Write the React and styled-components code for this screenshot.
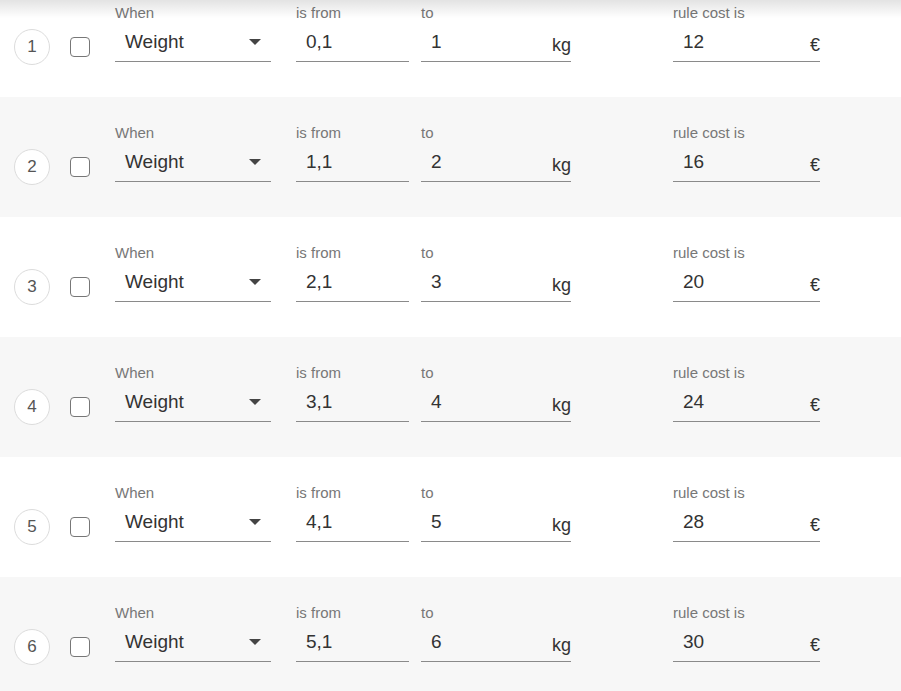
import styled, { createGlobalStyle } from 'styled-components';

const GlobalStyle = createGlobalStyle`
  html, body {
    margin: 0;
    padding: 0;
    background: #ffffff;
    overflow: hidden;
  }
  body {
    font-family: "Liberation Sans", Arial, sans-serif;
  }
`;

const Page = styled.div`
  position: relative;
  width: 901px;
  height: 691px;
  overflow: hidden;
  background: #fff;

  &::before {
    content: "";
    position: absolute;
    top: 0;
    left: 0;
    right: 0;
    height: 18px;
    background: linear-gradient(to bottom, rgba(0, 0, 0, 0.11), rgba(0, 0, 0, 0));
    pointer-events: none;
    z-index: 2;
  }
`;

const List = styled.div`
  margin-top: -23px;
  display: flex;
  flex-direction: column;
`;

const Row = styled.div`
  height: 120px;
  box-sizing: border-box;
  display: flex;
  align-items: flex-start;
  padding: 26px 0 0 14px;
  background: ${p => (p.$shaded ? '#f7f7f7' : '#ffffff')};
`;

const Index = styled.div`
  width: 36px;
  height: 36px;
  box-sizing: border-box;
  margin-top: 26px;
  border: 1px solid #dcdcdc;
  border-radius: 50%;
  background: #fff;
  display: flex;
  align-items: center;
  justify-content: center;
  font-size: 17px;
  color: #555;
`;

const Check = styled.div`
  width: 20px;
  height: 20px;
  box-sizing: border-box;
  margin: 34px 0 0 20px;
  border: 1.5px solid #777;
  border-radius: 4px;
  background: #fff;
`;

const Field = styled.div`
  width: ${p => p.$w}px;
  margin-left: ${p => p.$gap}px;
  display: flex;
  flex-direction: column;
`;

const Label = styled.div`
  box-sizing: border-box;
  height: 16px;
  padding-top: 1px;
  font-size: 15px;
  line-height: 17px;
  color: #777;
  white-space: nowrap;
`;

const Control = styled.div`
  height: 43px;
  box-sizing: border-box;
  padding: 4px 0 0 10px;
  border-bottom: 1px solid #8a8a8a;
  display: flex;
  align-items: center;
  font-size: 19px;
  color: #333;
`;

const Value = styled.span`
  flex: 1;
`;

const Unit = styled.span`
  font-size: 18px;
  color: #333;
  margin-top: 6px;
`;

const Arrow = styled.span`
  width: 0;
  height: 0;
  margin-right: 10px;
  border-left: 6.5px solid transparent;
  border-right: 6.5px solid transparent;
  border-top: 6.5px solid #444;
`;

const rows = [
  ['0,1', '1', '12'],
  ['1,1', '2', '16'],
  ['2,1', '3', '20'],
  ['3,1', '4', '24'],
  ['4,1', '5', '28'],
  ['5,1', '6', '30'],
];

export default function App() {
  return (
    <Page>
      <GlobalStyle />
      <List>
        {rows.map(([from, to, cost], i) => (
          <Row key={i} $shaded={i % 2 === 1}>
            <Index>{i + 1}</Index>
            <Check />
            <Field $w={156} $gap={25}>
              <Label>When</Label>
              <Control>
                <Value>Weight</Value>
                <Arrow />
              </Control>
            </Field>
            <Field $w={113} $gap={25}>
              <Label>is from</Label>
              <Control>
                <Value>{from}</Value>
              </Control>
            </Field>
            <Field $w={150} $gap={12}>
              <Label>to</Label>
              <Control>
                <Value>{to}</Value>
                <Unit>kg</Unit>
              </Control>
            </Field>
            <Field $w={147} $gap={102}>
              <Label>rule cost is</Label>
              <Control>
                <Value>{cost}</Value>
                <Unit>€</Unit>
              </Control>
            </Field>
          </Row>
        ))}
      </List>
    </Page>
  );
}
